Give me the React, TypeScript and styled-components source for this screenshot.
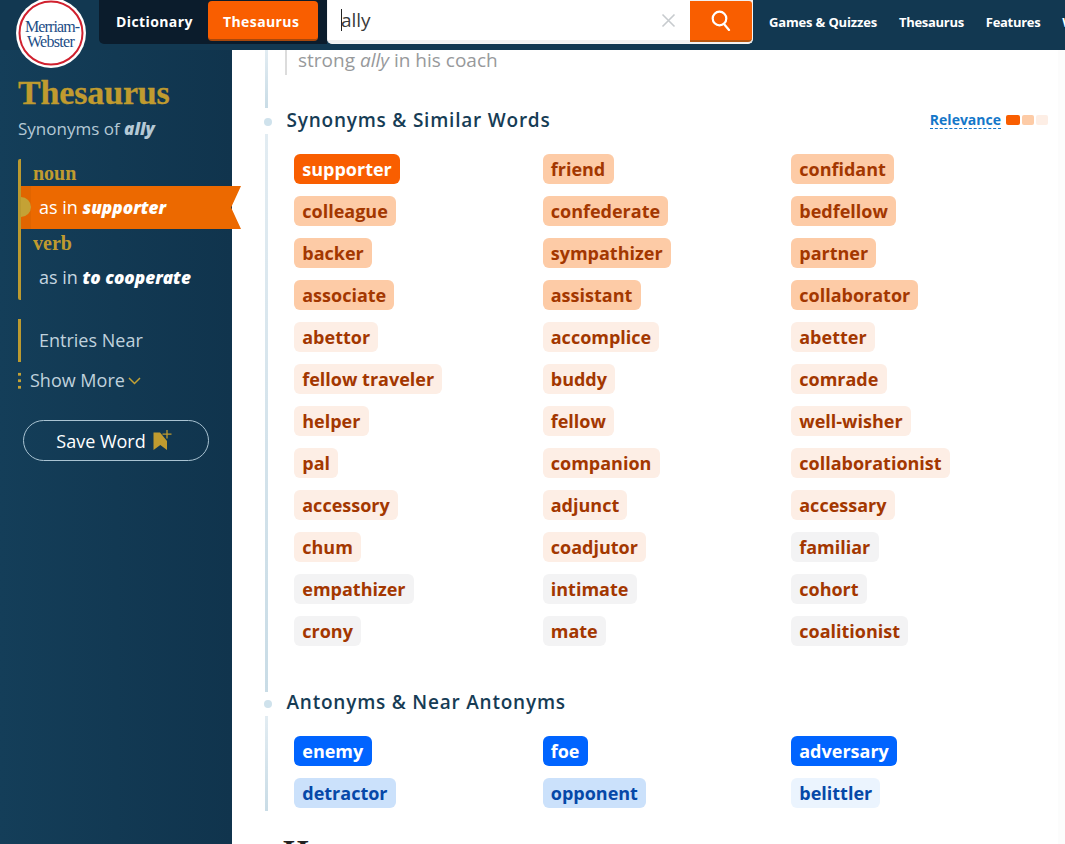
import React from "react";
import styled, { createGlobalStyle } from "styled-components";

const Global = createGlobalStyle`
  html, body { margin: 0; padding: 0; height: 100%; overflow: hidden; background: #fff; }
  body { font-family: "Open Sans", "Liberation Sans", sans-serif; }
`;

const Page = styled.div`
  position: relative;
  width: 1065px;
  height: 844px;
  overflow: hidden;
  display: flex;
  flex-direction: column;
`;

const Header = styled.header`
  height: 50px;
  flex: none;
  background: #123851;
  display: flex;
  align-items: flex-start;
  padding-left: 99px;
  white-space: nowrap;
  overflow: hidden;
`;

const Logo = styled.div`
  position: absolute;
  left: 16px;
  top: 0;
  width: 70px;
  height: 68px;
  z-index: 3;
`;

const LogoText = styled.text<{ $spacing: number }>`
  font-family: "Liberation Serif", serif;
  font-size: 16px;
  fill: #1c4d86;
  letter-spacing: ${(p) => p.$spacing}px;
`;

const Tabs = styled.div`
  flex: none;
  width: 228px;
  height: 44px;
  background: #0b1c2c;
  border-radius: 0 0 0 5px;
  display: flex;
  align-items: flex-start;
  box-sizing: border-box;
  padding: 1px 0 0 17px;
`;

const TabPlain = styled.span`
  width: 92px;
  height: 41px;
  line-height: 42px;
  font-size: 14px;
  font-weight: 700;
  letter-spacing: 0.4px;
  color: #fff;
`;

const TabActive = styled.span`
  width: 110px;
  height: 40px;
  box-sizing: border-box;
  background: #f95e00;
  border-bottom: 2px solid #a8480c;
  border-radius: 4px;
  line-height: 41px;
  padding-left: 15px;
  font-size: 14px;
  font-weight: 700;
  letter-spacing: 0.4px;
  color: #fff;
`;

const Search = styled.div`
  flex: none;
  width: 426px;
  height: 44px;
  box-sizing: border-box;
  background: #f1f1f1;
  border: 1px solid #f4f4f4;
  border-top: 0;
  border-radius: 0 0 5px 5px;
  display: flex;
  overflow: hidden;
`;

const SearchField = styled.div`
  flex: 1;
  height: 40px;
  background: #fff;
  display: flex;
  align-items: center;
  padding-left: 13px;
  font-size: 19px;
  color: #3a3a3a;
  letter-spacing: -0.05px;
`;

const Caret = styled.span`
  width: 1px;
  height: 22px;
  background: #222;
  margin-right: -1px;
`;

const Clear = styled.span`
  margin-left: auto;
  margin-right: 14px;
  display: flex;
  color: #c7cbce;
`;

const SearchButton = styled.div`
  flex: none;
  width: 62px;
  height: 41px;
  margin-top: 1px;
  box-sizing: border-box;
  background: #f95e00;
  border-bottom: 2px solid #b9560f;
  border-radius: 0 3px 4px 0;
  display: flex;
  align-items: center;
  justify-content: center;
  color: #fff;
`;

const Nav = styled.nav`
  flex: none;
  display: flex;
  gap: 22px;
  margin-left: 16px;
  height: 44px;
  line-height: 44px;
  font-size: 13px;
  font-weight: 700;
  letter-spacing: -0.3px;
  color: #fff;
`;

const NavWide = styled.span`
  letter-spacing: -0.16px;
`;

const Body = styled.div`
  flex: 1;
  display: flex;
  min-height: 0;
`;

const Sidebar = styled.aside`
  width: 232px;
  flex: none;
  background: linear-gradient(90deg, #143e59 0%, #10344d 100%);
  box-sizing: border-box;
  padding: 23px 0 0 18px;
`;

const Brand = styled.div`
  font-family: "Liberation Serif", serif;
  font-weight: 700;
  font-size: 34px;
  line-height: 40px;
  letter-spacing: -0.15px;
  color: #c09b2f;
  -webkit-text-stroke: 0.3px #c09b2f;
`;

const Sub = styled.div`
  margin-top: 5px;
  font-size: 17px;
  line-height: 22px;
  color: #b5c9d5;
  b { font-style: italic; font-weight: 800; }
`;

const PosGroup = styled.div`
  margin-top: 19px;
  border-left: 3px solid #bb9a30;
  border-radius: 2px;
  height: 141px;
  display: flex;
  flex-direction: column;
`;

const PosLabel = styled.div`
  font-family: "Liberation Serif", serif;
  font-weight: 700;
  font-size: 20px;
  height: 27px;
  line-height: 29px;
  padding-left: 12px;
  color: #c09b2f;
`;

const Sense = styled.div`
  height: 43px;
  line-height: 43px;
  padding-left: 18px;
  font-size: 18px;
  color: #c6d6e0;
  b { font-size: 17.2px; font-style: italic; font-weight: 800; color: #fff; }
`;

const SenseActive = styled.div`
  position: relative;
  width: 220px;
  height: 43px;
  line-height: 43px;
  box-sizing: border-box;
  padding-left: 18px;
  font-size: 18px;
  color: #fff;
  background: linear-gradient(90deg, #e16500 10px, #ec6900 10px);
  clip-path: polygon(0 0, 100% 0, 95.5% 50%, 100% 100%, 0 100%);
  b { font-size: 17.2px; font-style: italic; font-weight: 800; }
`;

const Knob = styled.span`
  position: absolute;
  left: -10px;
  top: 11px;
  width: 20px;
  height: 20px;
  border-radius: 50%;
  background: #c4a235;
`;

const NearLink = styled.div`
  margin-top: 19px;
  border-left: 3px solid #bb9a30;
  height: 43px;
  line-height: 43px;
  padding-left: 18px;
  font-size: 18px;
  color: #c0d2dd;
`;

const ShowMore = styled.div`
  margin-top: 7px;
  height: 22px;
  display: flex;
  align-items: center;
  font-size: 18px;
  color: #c0d2dd;
`;

const Dots = styled.span`
  width: 3px;
  height: 18px;
  margin-right: 9px;
  background: radial-gradient(circle, #c4a235 1.4px, transparent 1.6px) 0 0 / 3px 6.5px repeat-y;
`;

const ChevronWrap = styled.span`
  display: flex;
  margin-left: 3px;
  margin-top: 2px;
  color: #c4a235;
`;

const SaveButton = styled.div`
  margin: 29px 0 0 5px;
  width: 186px;
  height: 41px;
  box-sizing: border-box;
  border: 1px solid #a9c3d2;
  border-radius: 21px;
  display: flex;
  align-items: center;
  justify-content: center;
  gap: 7px;
  padding-right: 4px;
  font-size: 18px;
  line-height: 38px;
  color: #fff;
`;

const Main = styled.main`
  flex: 1;
  display: flex;
  background: #fff;
`;

const Timeline = styled.div`
  width: 826px;
  box-sizing: border-box;
  padding-left: 33px;
  position: relative;
`;

const RightGutter = styled.div`
  flex: 1;
  background: #fcfcfc;
`;

const Rail = styled.span<{ $top: number; $height: number }>`
  position: absolute;
  left: 33px;
  top: ${(p) => p.$top}px;
  height: ${(p) => p.$height}px;
  width: 3px;
  background: linear-gradient(180deg, #e2ecf2, #c9dce6);
`;

const RailDot = styled.span<{ $top: number }>`
  position: absolute;
  left: 32px;
  top: ${(p) => p.$top}px;
  width: 8px;
  height: 8px;
  border-radius: 50%;
  background: #cfe2ec;
`;

const Example = styled.div`
  margin-left: 20px;
  height: 25px;
  border-left: 2px solid #dcdcdc;
  padding-left: 11px;
  font-size: 19px;
  line-height: 21px;
  color: #97999b;
  em { font-style: italic; }
`;

const SectionHead = styled.div<{ $gap: number }>`
  display: flex;
  align-items: center;
  justify-content: space-between;
  height: 28px;
  margin-left: 21.5px;
  margin-top: ${(p) => p.$gap}px;
  padding-right: 10px;
`;

const SectionTitle = styled.h2`
  margin: 0;
  font-size: 19px;
  font-weight: 600;
  letter-spacing: 0.78px;
  color: #163c55;
`;

const Relevance = styled.div`
  display: flex;
  align-items: center;
  gap: 5px;
  margin-top: -1px;
`;

const RelevanceLabel = styled.span`
  font-size: 14px;
  font-weight: 700;
  color: #1477c9;
  line-height: 17px;
  border-bottom: 1px dashed #1477c9;
`;

const Swatches = styled.span`
  display: flex;
  gap: 2px;
`;

const Swatch = styled.i<{ $color: string; $w: number }>`
  display: block;
  width: ${(p) => p.$w}px;
  height: 10px;
  border-radius: 2px;
  background: ${(p) => p.$color};
`;

const ChipGrid = styled.div`
  display: grid;
  grid-template-columns: 248.5px 248.5px 1fr;
  row-gap: 12px;
  margin: 20px 0 0 29px;
  justify-items: start;
`;

const palette = {
  top: { bg: "#f95e00", fg: "#fff" },
  high: { bg: "#fdcba6", fg: "#a33700" },
  mid: { bg: "#fdeee5", fg: "#a33700" },
  low: { bg: "#f3f3f4", fg: "#a33700" },
  antTop: { bg: "#0064ff", fg: "#fff" },
  antHigh: { bg: "#cbe1fb", fg: "#0648a8" },
  antLow: { bg: "#ebf4fe", fg: "#0648a8" },
};

type Tone = keyof typeof palette;

const Chip = styled.span<{ $tone: Tone }>`
  height: 30px;
  line-height: 30px;
  padding: 0 8.25px;
  border-radius: 6px;
  font-size: 18px;
  font-weight: 700;
  white-space: nowrap;
  background: ${(p) => palette[p.$tone].bg};
  color: ${(p) => palette[p.$tone].fg};
`;

const NextHeading = styled.div`
  margin: 27px 0 0 18px;
  font-family: "Liberation Serif", serif;
  font-weight: 700;
  font-size: 33px;
  line-height: 34px;
  color: #222;
`;

const synonyms: [string, Tone][] = [
  ["supporter", "top"], ["friend", "high"], ["confidant", "high"],
  ["colleague", "high"], ["confederate", "high"], ["bedfellow", "high"],
  ["backer", "high"], ["sympathizer", "high"], ["partner", "high"],
  ["associate", "high"], ["assistant", "high"], ["collaborator", "high"],
  ["abettor", "mid"], ["accomplice", "mid"], ["abetter", "mid"],
  ["fellow traveler", "mid"], ["buddy", "mid"], ["comrade", "mid"],
  ["helper", "mid"], ["fellow", "mid"], ["well-wisher", "mid"],
  ["pal", "mid"], ["companion", "mid"], ["collaborationist", "mid"],
  ["accessory", "mid"], ["adjunct", "mid"], ["accessary", "mid"],
  ["chum", "mid"], ["coadjutor", "mid"], ["familiar", "low"],
  ["empathizer", "low"], ["intimate", "low"], ["cohort", "low"],
  ["crony", "low"], ["mate", "low"], ["coalitionist", "low"],
];

const antonyms: [string, Tone][] = [
  ["enemy", "antTop"], ["foe", "antTop"], ["adversary", "antTop"],
  ["detractor", "antHigh"], ["opponent", "antHigh"], ["belittler", "antLow"],
];

export default function App() {
  return (
    <Page>
      <Global />
      <Logo>
        <svg width="70" height="68" viewBox="0 0 70 68">
          <circle cx="35" cy="33" r="35" fill="#fff" />
          <circle cx="35" cy="33" r="31.5" fill="none" stroke="#d0202e" strokeWidth="2" />
          <LogoText $spacing={-0.9} x="9" y="32">Merriam-</LogoText>
          <LogoText $spacing={-0.7} x="11" y="46.5">Webster</LogoText>
        </svg>
      </Logo>
      <Header>
        <Tabs>
          <TabPlain>Dictionary</TabPlain>
          <TabActive>Thesaurus</TabActive>
        </Tabs>
        <Search>
          <SearchField>
            <Caret />
            ally
            <Clear>
              <svg width="15" height="15" viewBox="0 0 15 15" fill="none" stroke="currentColor" strokeWidth="1.6">
                <path d="M1.5 1.5l12 12M13.5 1.5l-12 12" />
              </svg>
            </Clear>
          </SearchField>
          <SearchButton>
            <svg width="20" height="21" viewBox="0 0 20 21" fill="none" stroke="currentColor" strokeWidth="2.2">
              <circle cx="8.5" cy="8.5" r="6.8" />
              <path d="M13 14l5 6" strokeLinecap="round" />
            </svg>
          </SearchButton>
        </Search>
        <Nav>
          <NavWide>Games &amp; Quizzes</NavWide>
          <span>Thesaurus</span>
          <span>Features</span>
          <span>Word of the Day</span>
        </Nav>
      </Header>
      <Body>
        <Sidebar>
          <Brand>Thesaurus</Brand>
          <Sub>Synonyms of <b>ally</b></Sub>
          <PosGroup>
            <PosLabel>noun</PosLabel>
            <SenseActive>
              <Knob />
              as in <b>supporter</b>
            </SenseActive>
            <PosLabel>verb</PosLabel>
            <Sense>as in <b>to cooperate</b></Sense>
          </PosGroup>
          <NearLink>Entries Near</NearLink>
          <ShowMore>
            <Dots />
            Show More
            <ChevronWrap>
              <svg width="13" height="8" viewBox="0 0 13 8" fill="none" stroke="currentColor" strokeWidth="1.5">
                <path d="M1 1l5.5 5.5L12 1" />
              </svg>
            </ChevronWrap>
          </ShowMore>
          <SaveButton>
            Save Word
            <svg width="19" height="22" viewBox="0 0 19 22">
              <path d="M0.5 2.5H7l7 8.5V20l-6.7-5L0.5 20z" fill="#c09b2f" />
              <path d="M14 0v8.5M9.5 4.2h9" stroke="#c09b2f" strokeWidth="1.3" fill="none" />
            </svg>
          </SaveButton>
        </Sidebar>
        <Main>
          <Timeline>
            <Rail $top={0} $height={58} />
            <RailDot $top={68} />
            <Rail $top={84} $height={558} />
            <RailDot $top={650} />
            <Rail $top={666} $height={95} />
            <Example>strong <em>ally</em> in his coach</Example>
            <SectionHead $gap={31}>
              <SectionTitle>Synonyms &amp; Similar Words</SectionTitle>
              <Relevance>
                <RelevanceLabel>Relevance</RelevanceLabel>
                <Swatches>
                  <Swatch $color="#f95e00" $w={14} />
                  <Swatch $color="#fdcba6" $w={12} />
                  <Swatch $color="#fdeee5" $w={12} />
                </Swatches>
              </Relevance>
            </SectionHead>
            <ChipGrid>
              {synonyms.map(([w, t]) => (
                <Chip key={w} $tone={t}>{w}</Chip>
              ))}
            </ChipGrid>
            <SectionHead $gap={42}>
              <SectionTitle>Antonyms &amp; Near Antonyms</SectionTitle>
            </SectionHead>
            <ChipGrid>
              {antonyms.map(([w, t]) => (
                <Chip key={w} $tone={t}>{w}</Chip>
              ))}
            </ChipGrid>
            <NextHeading>How</NextHeading>
          </Timeline>
          <RightGutter />
        </Main>
      </Body>
    </Page>
  );
}
